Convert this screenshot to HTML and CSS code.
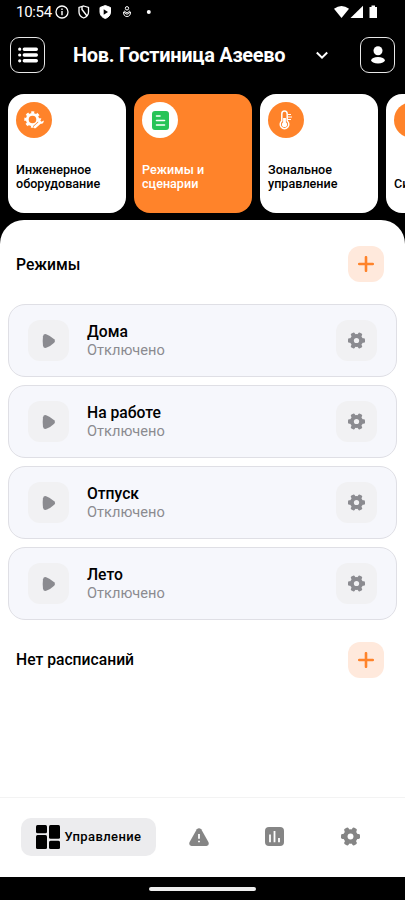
FILE: index.html
```
<!DOCTYPE html>
<html lang="ru">
<head>
<meta charset="utf-8">
<title>Нов. Гостиница Азеево</title>
<link rel="stylesheet" href="styles.css">
</head>
<body>
<svg class="defs" aria-hidden="true">
  <defs>
    <mask id="hole"><rect width="24" height="24" fill="#fff"/><circle cx="12" cy="12" r="3.700" fill="#000"/></mask>
    <symbol id="gear" viewBox="0 0 24 24">
      <g mask="url(#hole)">
        <circle cx="12" cy="12" r="9.200"/>
        <rect x="0" y="8.900" width="24" height="6.200" rx="1.800"/>
        <rect x="0" y="8.900" width="24" height="6.200" rx="1.800" transform="rotate(60 12 12)"/>
        <rect x="0" y="8.900" width="24" height="6.200" rx="1.800" transform="rotate(120 12 12)"/>
      </g>
    </symbol>
    <symbol id="play" viewBox="0 0 14 16">
      <path d="M1 3.300Q1.500.5 4.200 1.200Q9 3 12.200 6.200Q14 8 12.200 9.800Q9 13 4.200 14.800Q1.500 15.500 1 12.700Q.4 8 1 3.300Z"/>
    </symbol>
    <symbol id="plus" viewBox="0 0 16 16">
      <path d="M8 1.200V14.800M1.200 8H14.800" fill="none" stroke="currentColor" stroke-width="2.600" stroke-linecap="round"/>
    </symbol>
  </defs>
</svg>
<div class="screen">
  <div class="status">
    <span class="time">10:54</span>
    <svg class="status-left" width="98" height="16" viewBox="0 0 98 16" fill="none" stroke="#fff">
      <circle cx="7" cy="8" r="6" stroke-width="1.300"/><path d="M7 7V11.200M7 4.600V6" stroke-width="1.400"/>
      <path d="M28.700 2L33.500 3.500V8C33.500 11 31.500 13 28.700 14C26 13 24 11 24 8V3.500Z" stroke-width="1.300"/><path d="M27 2.500V5.500L32 12" stroke-width="1.400"/>
      <path d="M50.300 1.500L55.500 3.500V8C55.500 11 53.500 13.500 50.300 14.500C47 13.500 45 11 45 8V3.500Z" fill="#fff"/><path d="M48.700 5.300V10.700L53 8Z" fill="#000" stroke="none"/>
      <circle cx="72" cy="4.300" r="1.700"/><path d="M68.500 8Q68.500 12.500 72 12.500T75.500 8L72 10.300ZM69 6.800L72 9L75 6.800"/>
      <circle cx="93.800" cy="8" r="2" fill="#fff" stroke="none"/>
    </svg>
    <svg class="status-right" width="44" height="14" viewBox="0 0 44 14" fill="#fff">
      <path d="M0 3.800Q7.500-2 15 3.800L7.500 13Z"/><path d="M16.500 13L29 .7V13Z"/><path d="M35.500 2H37.500V.5H41V2H43V13H35.500Z"/>
    </svg>
  </div>
  <header class="header">
    <div class="square">
      <svg width="20" height="16" viewBox="0 0 20 16" stroke="#fff" stroke-linecap="round"><path d="M6.300 2.200H18.300M6.300 8H18.300M6.300 13.800H18.300" stroke-width="3.400"/><path d="M1.700 2.200h.01M1.700 8h.01M1.700 13.800h.01" stroke-width="3.200"/></svg>
    </div>
    <h1>Нов. Гостиница Азеево</h1>
    <svg class="chevron" width="14" height="9" viewBox="0 0 14 9"><path d="M1.800 1.500L7 6.700L12.200 1.500" fill="none" stroke="#fff" stroke-width="2"/></svg>
    <div class="square">
      <svg width="14" height="18" viewBox="0 0 14 18" fill="#fff"><circle cx="7" cy="4.700" r="4.500"/><ellipse cx="7" cy="14.200" rx="6.800" ry="3.200"/></svg>
    </div>
  </header>
  <nav class="cards">
    <div class="card">
      <div class="disc">
        <svg width="22" height="20" viewBox="0 0 22 20">
          <g fill="none" stroke="#fff"><circle cx="9.500" cy="9.500" r="5.200" stroke-width="2.800"/><circle cx="9.500" cy="9.500" r="7" stroke-width="2.400" stroke-dasharray="3 2.498" stroke-dashoffset="1.500"/></g>
          <path d="M12 18.500L20 11" stroke="#ff832a" stroke-width="6"/>
          <path d="M12 17L16.500 13" stroke="#fff" stroke-width="2.600" stroke-linecap="round"/>
          <path d="M18.500 8.500L17.300 10.500L18.500 11.800L20.800 10.500Q20.800 14.200 17 13.800L15 12Q15.200 8.700 18.500 8.500Z" fill="#fff"/>
        </svg>
      </div>
      <p>Инженерное оборудование</p>
    </div>
    <div class="card active">
      <div class="disc">
        <svg width="17" height="19" viewBox="0 0 17 19"><rect width="17" height="19" rx="3" fill="#27c457"/><path d="M4.500 5H8M4.500 9.500H12.500M4.500 14H12.500" stroke="#fff" stroke-width="1.600" stroke-linecap="round"/></svg>
      </div>
      <p>Режимы и сценарии</p>
    </div>
    <div class="card">
      <div class="disc">
        <svg width="14" height="20" viewBox="0 0 14 20" fill="none" stroke="#fff"><path d="M2.800 11V4Q2.800 1 5.500 1T8.200 4V11A4.300 4.300 0 1 1 2.800 11Z" stroke-width="1.500"/><circle cx="5.500" cy="14.500" r="2.600" fill="#fff" stroke="none"/><path d="M5.500 8V14" stroke-width="2.800"/><path d="M9 4.500H12M9 7H13M9 9.500H12" stroke-width="1.200"/></svg>
      </div>
      <p>Зональное управление</p>
    </div>
    <div class="card"><div class="disc"></div><p>Си</p></div>
  </nav>
  <main class="sheet">
    <div class="section-head"><h2>Режимы</h2><div class="add"><svg><use href="#plus"/></svg></div></div>
    <div class="modes">
      <div class="mode"><div class="tile"><svg class="play"><use href="#play"/></svg></div><div class="label"><b>Дома</b><span>Отключено</span></div><div class="tile"><svg class="gear"><use href="#gear"/></svg></div></div>
      <div class="mode"><div class="tile"><svg class="play"><use href="#play"/></svg></div><div class="label"><b>На работе</b><span>Отключено</span></div><div class="tile"><svg class="gear"><use href="#gear"/></svg></div></div>
      <div class="mode"><div class="tile"><svg class="play"><use href="#play"/></svg></div><div class="label"><b>Отпуск</b><span>Отключено</span></div><div class="tile"><svg class="gear"><use href="#gear"/></svg></div></div>
      <div class="mode"><div class="tile"><svg class="play"><use href="#play"/></svg></div><div class="label"><b>Лето</b><span>Отключено</span></div><div class="tile"><svg class="gear"><use href="#gear"/></svg></div></div>
    </div>
    <div class="section-head schedule"><h2>Нет расписаний</h2><div class="add"><svg><use href="#plus"/></svg></div></div>
  </main>
  <footer class="tabs">
    <div class="tab current">
      <svg width="24" height="24" viewBox="0 0 24 24"><rect width="11" height="8.300" rx="1.500"/><rect x="13" width="11" height="13.700" rx="1.500"/><rect y="10" width="11" height="14" rx="1.500"/><rect x="13" y="15.700" width="11" height="8.300" rx="1.500"/></svg>
      <span>Управление</span>
    </div>
    <div class="tab"><svg width="20" height="18" viewBox="0 0 20 18"><path d="M7.800 1.300Q10-1 12.200 1.300L19.500 14.200Q20.500 17.500 17.500 18H2.500Q-.5 17.500.5 14.200Z"/><path d="M10 6V10.800M10 12.700V14.200" stroke="#fff" stroke-width="1.800"/></svg></div>
    <div class="tab"><svg width="19" height="19" viewBox="0 0 19 19"><rect width="19" height="19" rx="4"/><path d="M5 7.500V15.200M9.500 4V15.200M14 11V15.200" stroke="#fff" stroke-width="1.800"/></svg></div>
    <div class="tab"><svg class="gear-lg"><use href="#gear"/></svg></div>
  </footer>
  <div class="system"><i></i></div>
</div>
</body>
</html>
```
FILE: styles.css
```
* { box-sizing: border-box; margin: 0; padding: 0; }
body { background: #000; font-family: Roboto, sans-serif; color: #000; }
svg { display: block; flex: none; }
.defs { position: absolute; width: 0; height: 0; }
.screen { width: 405px; height: 900px; display: flex; flex-direction: column; overflow: hidden; }
.status { height: 24px; display: flex; align-items: center; padding: 0 27px 0 16px; color: #fff; }
.time { font-size: 15px; line-height: 24px; letter-spacing: -.3px; width: 39px; white-space: nowrap; }
.status-right { margin-left: auto; }
.header { height: 70px; display: flex; align-items: flex-start; padding: 13px 10px 0; }
.square { width: 35px; height: 36px; border: 1px solid #e8e8e8; border-radius: 9px; display: flex; align-items: center; justify-content: center; flex: none; }
h1 { width: 242px; margin-left: 28px; font-size: 20px; font-weight: 700; line-height: 37px; letter-spacing: -.3px; color: #fff; white-space: nowrap; }
.chevron { margin: 14px 31px 0 0; }
.cards { height: 126px; display: flex; gap: 8px; padding: 0 0 7px 8px; overflow: hidden; }
.card { width: 118px; height: 119px; flex: none; border-radius: 16px; background: #fff; padding: 8px 8px 22px; display: flex; flex-direction: column; justify-content: space-between; }
.card p { font-size: 12.6px; line-height: 14px; font-weight: 500; }
.disc { width: 36px; height: 36px; border-radius: 50%; background: #ff832a; display: flex; align-items: center; justify-content: center; }
.card.active { background: #ff832a; color: #fff; }
.active .disc { background: #fff; }
.sheet { height: 577px; background: #fff; border-radius: 24px 24px 0 0; flex: none; padding-top: 26px; }
.section-head { height: 36px; display: flex; align-items: center; justify-content: space-between; padding: 0 21px 0 16px; }
h2 { font-size: 15.7px; font-weight: 500; line-height: 20px; padding-top: 1px; }
.schedule h2 { padding: 0; }
.add { width: 36px; height: 36px; border-radius: 12px; background: #ffe9dc; color: #ff832a; display: flex; align-items: center; justify-content: center; }
.add svg { width: 16px; height: 16px; }
.modes { display: flex; flex-direction: column; gap: 8px; padding: 22px 8px; }
.mode { height: 73px; border: 1px solid #dfdfe5; border-radius: 17px; background: #f6f7fc; display: flex; align-items: center; padding: 0 19px; }
.tile { width: 41px; height: 41px; border-radius: 12px; background: #f1f1f3; display: flex; align-items: center; justify-content: center; fill: #8b8b90; }
.play { width: 14px; height: 16px; }
.gear { width: 17px; height: 17px; }
.label { flex: 1; padding-left: 18px; display: flex; flex-direction: column; }
.label b { font-size: 15.7px; font-weight: 500; line-height: 19px; }
.label span { font-size: 14.6px; line-height: 19px; color: #8b8b90; }
.tabs { height: 80px; flex: none; background: #fff; border-top: 1px solid #f3f3f3; display: flex; align-items: center; padding: 0 17px 2px 21px; }
.tab { flex: 1; display: flex; justify-content: center; fill: #858585; }
.tab.current { flex: 0 0 135px; height: 38px; margin-right: 5px; border-radius: 10px; background: #ececee; align-items: center; gap: 5px; fill: #000; }
.tab.current span { font-size: 13px; font-weight: 500; letter-spacing: .4px; }
.gear-lg { width: 19px; height: 19px; }
.system { flex: 1; display: flex; align-items: center; justify-content: center; }
.system i { width: 107px; height: 4px; border-radius: 2px; background: #eee; }
```
